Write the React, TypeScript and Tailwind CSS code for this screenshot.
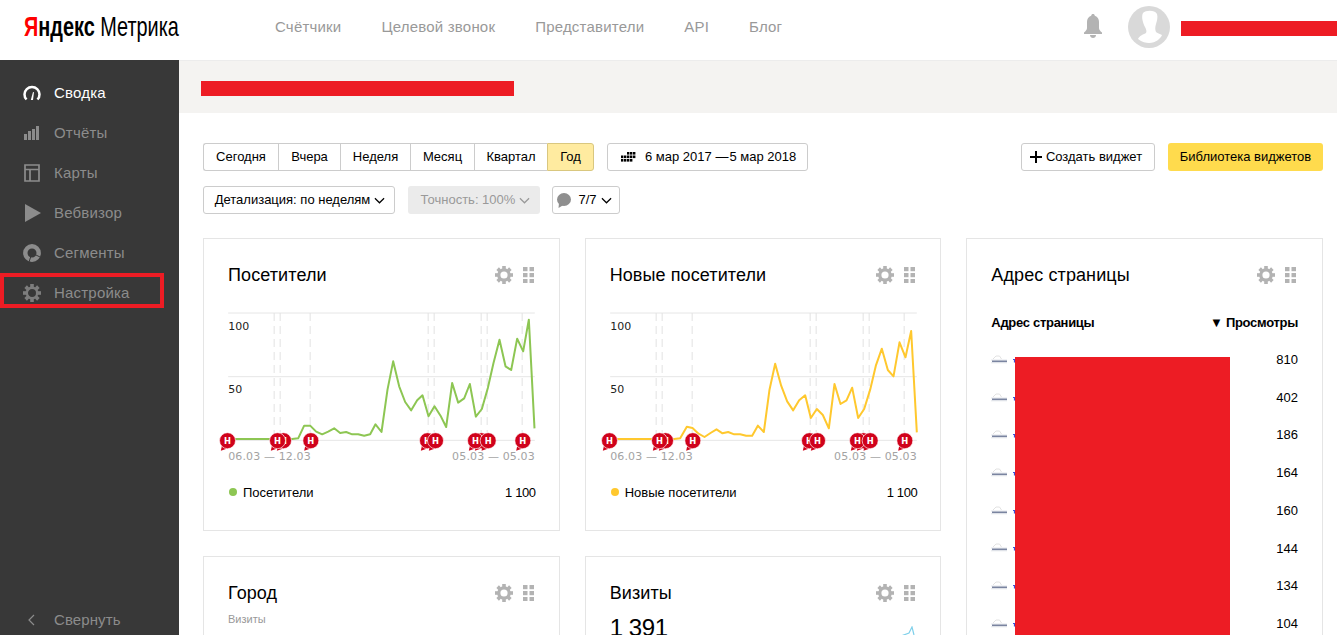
const font = { fontFamily: '"Liberation Sans", Arial, sans-serif' };

type Pt = [number, number];

const visitors: Pt[] = [[70,598],[190,598],[262,598],[280,596],[298,558],[316,558],[334,576],[352,584],[370,576],[388,566],[406,580],[424,577],[442,584],[460,584],[478,588],[496,584],[512,554],[530,577],[548,450],[565,365],[583,440],[601,487],[619,512],[637,482],[653,467],[671,530],[689,500],[707,528],[724,562],[742,430],[760,489],[778,476],[795,433],[813,531],[831,508],[849,445],[866,370],[884,300],[902,380],[919,391],[937,297],[955,335],[972,240],[989,566]];
const newVisitors: Pt[] = [[60,598],[180,598],[252,598],[270,596],[290,561],[307,565],[325,582],[343,592],[361,580],[379,569],[397,581],[414,577],[432,584],[450,584],[468,588],[486,588],[503,558],[521,577],[538,450],[555,372],[573,438],[591,485],[609,512],[627,482],[645,467],[662,535],[680,508],[698,526],[716,566],[733,433],[751,493],[769,482],[786,444],[804,535],[822,508],[840,450],[857,378],[875,327],[893,391],[910,410],[928,308],[946,353],[963,274],[980,578]];

const dashes = [208, 226, 316, 670, 688, 829, 847, 952];
const pins = [68, 236, 218, 318, 668, 692, 830, 812, 850, 954];

const Gear = ({ className = "", color = "#b3b3b3", ring = 3.2 }: { className?: string; color?: string; ring?: number }) => (
  <svg viewBox="0 0 18 18" className={className}>
    <circle cx="9" cy="9" r="5.2" fill="none" stroke={color} strokeWidth={ring} />
    {[0, 45, 90, 135, 180, 225, 270, 315].map((a) => (
      <rect key={a} x="7.2" y="0" width="3.6" height="3.6" fill={color} transform={`rotate(${a} 9 9)`} />
    ))}
  </svg>
);

const Dots = () => (
  <svg viewBox="0 0 11 16" className="w-[11px] h-[16px]">
    {[0, 6.5].map((x) =>
      [0, 6, 12].map((y) => <rect key={`${x}-${y}`} x={x} y={y} width="4.5" height="4.2" fill="#b3b3b3" />)
    )}
  </svg>
);

const Chevron = ({ color = "#000" }: { color?: string }) => (
  <svg viewBox="0 0 12 7" className="w-[11px] h-[7px] ml-[4px]">
    <path d="M1 1l5 5 5-5" fill="none" stroke={color} strokeWidth="1.3" />
  </svg>
);

const Chart = ({ pts, color, ox }: { pts: Pt[]; color: string; ox: number }) => (
  <svg viewBox={`${ox} 220 920 450`} className="w-[307px] h-[150px] overflow-visible">
    {[220, 411, 602].map((y) => (
      <line key={y} x1={ox} x2={ox + 920} y1={y} y2={y} stroke="#e6e6e6" strokeWidth="3" />
    ))}
    <g transform={`translate(${ox - 70} 0)`}>
      {dashes.map((x) => (
        <line key={x} x1={x} x2={x} y1={220} y2={602} stroke="#e2e2e2" strokeWidth="3" strokeDasharray="24 15" />
      ))}
    </g>
    <polyline points={pts.map((p) => p.join(",")).join(" ")} fill="none" stroke={color} strokeWidth="6" strokeLinejoin="round" />
    <g fontFamily='"DejaVu Sans", sans-serif' fontSize="33">
      <text x={ox} y={271} fill="#222">100</text>
      <text x={ox} y={460} fill="#222">50</text>
      <text x={ox} y={661} fill="#a3a3a3" letterSpacing="0.4">06.03 — 12.03</text>
      <text x={ox + 920} y={661} fill="#a3a3a3" textAnchor="end" letterSpacing="0.4">05.03 — 05.03</text>
    </g>
    <g transform={`translate(${ox - 70} 0)`}>
      {pins.map((x, i) => (
        <g key={i}>
          <path d={`M${x - 16} 615 L${x - 20} 633 L${x + 6} 624 Z`} fill="#d0021b" />
          <circle cx={x} cy={603} r={24} fill="#d0021b" stroke="#fff" strokeWidth="2" />
          <text x={x} y={612} fill="#fff" fontSize="25" fontWeight="700" textAnchor="middle" fontFamily='"DejaVu Sans", sans-serif'>Н</text>
        </g>
      ))}
    </g>
  </svg>
);

const CardHead = ({ title }: { title: string }) => (
  <div className="flex items-center justify-between h-[24px] pr-[2px]">
    <div className="text-[18px] text-black tracking-[0.1px]">{title}</div>
    <div className="flex items-center gap-[10px]">
      <Gear className="w-[18px] h-[18px]" />
      <Dots />
    </div>
  </div>
);

const ChartCard = ({ title, pts, color, ox }: { title: string; pts: Pt[]; color: string; ox: number }) => (
  <div className="h-[293px] border border-[#e5e5e5] pl-[24px] pr-[23px] pt-[24px] bg-white">
    <CardHead title={title} />
    <div className="mt-[26px]">
      <Chart pts={pts} color={color} ox={ox} />
    </div>
    <div className="mt-[21px] flex items-center justify-between h-[18px] text-[13px] text-black">
      <div className="flex items-center">
        <span className="w-[8px] h-[8px] rounded-full ml-[1px] mr-[6px] -mt-[3px]" style={{ background: color }} />
        {title}
      </div>
      <div className="tracking-[-0.4px]">1 100</div>
    </div>
  </div>
);

const Favicon = () => (
  <svg viewBox="0 0 24 12" className="w-[24px] h-[12px] shrink-0 overflow-visible">
    <path d="M2 5L5 2h3.500l2 3" fill="none" stroke="#e2e2e2" strokeWidth="1" />
    <rect x="0" y="5.500" width="16" height="1" fill="#e3e6ec" />
    <rect x="1" y="6.500" width="15" height="1.800" fill="#7a84a0" />
    <rect x="0" y="8.300" width="16" height="1" fill="#e3e6ec" />
    <path d="M22 5.500h2.500M23.500 5.500v3" fill="none" stroke="#3f51d8" strokeWidth="1.200" />
  </svg>
);

const rows = ["810", "402", "186", "164", "160", "144", "134", "104"];

const SideItem = ({ icon, label, active }: { icon: React.ReactNode; label: string; active?: boolean }) => (
  <div className={`flex items-center h-[40px] text-[15px] tracking-[0.2px] ${active ? "text-white" : "text-[#8c8c8c]"}`}>
    <div className="w-[54px] pl-[23px] flex items-center shrink-0">{icon}</div>
    {label}
  </div>
);

const segments = [
  { label: "Сегодня", w: "w-[75px]" },
  { label: "Вчера", w: "w-[62px]" },
  { label: "Неделя", w: "w-[70px]" },
  { label: "Месяц", w: "w-[64px]" },
  { label: "Квартал", w: "w-[73px]" },
];

export default function App() {
  return (
    <div className="h-screen overflow-hidden bg-white flex flex-col text-black" style={font}>
      {/* шапка */}
      <div className="h-[60px] shrink-0 flex items-center bg-white">
        <div className="w-[275px] pl-[24px] -mt-[7px]">
          <div className="text-[28px] leading-none whitespace-nowrap origin-left scale-x-[0.71]">
            <span className="font-bold"><span className="text-[#f00]">Я</span>ндекс</span> Метрика
          </div>
        </div>
        <div className="flex items-center gap-[40px] text-[15px] text-[#999] tracking-[0.2px] -mt-[6px]">
          <span>Счётчики</span>
          <span>Целевой звонок</span>
          <span>Представители</span>
          <span>API</span>
          <span>Блог</span>
        </div>
        <div className="ml-auto flex items-center -mt-[6px]">
          <svg viewBox="0 0 18 24" className="w-[18px] h-[24px] mr-[26px] -mt-[2px]">
            <path d="M9 0c1 0 1.7.7 1.8 1.7C13.800 2.600 15 5.200 15 8v6c0 1.500 1.200 3 3 4.500V20H0v-1.500C1.800 17 3 15.500 3 14V8c0-2.800 1.200-5.400 4.200-6.300C7.300.7 8 0 9 0z" fill="#b3b3b3" />
            <path d="M6 21h6c0 2-1.500 3-3 3s-3-1-3-3z" fill="#b3b3b3" />
          </svg>
          <svg viewBox="0 0 42 42" className="w-[42px] h-[42px] mr-[11px]">
            <circle cx="21" cy="21" r="21" fill="#d9d9d9" />
            <path d="M15 7c3-3 12-3 14 1 1 3 0 7-1 10-1 3-1 6 0 8 1 1 4 2 6 3-1 3-6 8-13 8-3 0-7-1-11-4 1-3 6-5 8-6 1-2 0-4-1-6-2-4-4-10-2-14z" fill="#fff" />
          </svg>
          <div className="w-[156px] h-[15px] bg-[#ed1c24] mt-[3px]" />
        </div>
      </div>

      <div className="flex flex-1 min-h-0">
        {/* боковое меню */}
        <div className="relative w-[179px] shrink-0 bg-[#383838] pt-[13px] flex flex-col">
          <SideItem
            active
            label="Сводка"
            icon={
              <svg viewBox="0 0 18 14" className="w-[18px] h-[14px] overflow-visible">
                <path d="M3.500 13.500A7.500 7.500 0 1 1 14.500 13.500" fill="none" stroke="#fff" strokeWidth="2.500" />
                <path d="M7.800 14l2.200-8 1 .3L10 14z" fill="#fff" />
              </svg>
            }
          />
          <SideItem
            label="Отчёты"
            icon={
              <svg viewBox="0 0 15 14" className="w-[15px] h-[14px] ml-[1px]">
                <rect x="0" y="8" width="3" height="6" fill="#8c8c8c" />
                <rect x="4" y="5" width="3" height="9" fill="#8c8c8c" />
                <rect x="8" y="3" width="3" height="11" fill="#8c8c8c" />
                <rect x="12" y="0" width="3" height="14" fill="#8c8c8c" />
              </svg>
            }
          />
          <SideItem
            label="Карты"
            icon={
              <svg viewBox="0 0 16 18" className="w-[16px] h-[18px] ml-[1px]">
                <path d="M1 1h14v16H1zM1 5.500h14M6 5.500V17" fill="none" stroke="#8c8c8c" strokeWidth="1.700" />
              </svg>
            }
          />
          <SideItem
            label="Вебвизор"
            icon={
              <svg viewBox="0 0 16 18" className="w-[16px] h-[18px] ml-[2px]">
                <path d="M0 0l16 9-16 9z" fill="#8c8c8c" />
              </svg>
            }
          />
          <SideItem
            label="Сегменты"
            icon={
              <svg viewBox="0 0 18 18" className="w-[18px] h-[18px]">
                <circle cx="9" cy="9" r="6.700" fill="none" stroke="#8c8c8c" strokeWidth="4.400" />
                <path d="M12 10.500l6 3M8 12l-2 6" stroke="#383838" strokeWidth="1" />
              </svg>
            }
          />
          <SideItem label="Настройка" icon={<Gear className="w-[18px] h-[18px]" color="#7d7d7d" ring={2.400} />} />
          {/* красная рамка поверх пункта */}
          <div className="absolute left-0 top-[213px] w-[164px] h-[35px] border-4 border-[#ed1c24]" />
          <div className="mt-auto flex items-center h-[30px] text-[15px] tracking-[0.1px] text-[#8c8c8c] pl-[28px]">
            <svg viewBox="0 0 7 12" className="w-[7px] h-[12px] mr-[19px]">
              <path d="M6 1L1 6l5 5" fill="none" stroke="#8c8c8c" strokeWidth="1.200" />
            </svg>
            Свернуть
          </div>
        </div>

        {/* контент */}
        <div className="flex-1 min-w-0">
          <div className="h-[53px] bg-[#f4f3f1] border-t border-[#ececec] flex items-center pl-[22px] pt-[2px]">
            <div className="w-[313px] h-[15px] bg-[#ed1c24]" />
          </div>

          <div className="pl-[24px] pr-[14px] pt-[30px]">
            <div className="flex items-center h-[28px] text-[13px]">
              <div className="flex">
                {segments.map((s, i) => (
                  <div
                    key={s.label}
                    className={`${s.w} h-[28px] flex items-center justify-center border-y border-l border-[#ccc] ${i === 0 ? "rounded-l-[3px]" : ""}`}
                  >
                    {s.label}
                  </div>
                ))}
                <div className="w-[47px] h-[28px] flex items-center justify-center bg-[#ffeba0] border border-[#d9c77f] rounded-r-[3px]">
                  Год
                </div>
              </div>
              <div className="ml-[13px] w-[201px] h-[28px] flex items-center border border-[#ccc] rounded-[3px] pl-[13px]">
                <svg viewBox="0 0 15 10" className="w-[15px] h-[10px] mr-[9px]">
                  {[
                    [6, 0], [9, 0], [12, 0],
                    [0, 3.500], [3, 3.500], [6, 3.500], [9, 3.500], [12, 3.500],
                    [0, 7], [3, 7], [6, 7], [9, 7],
                  ].map(([x, y]) => (
                    <rect key={`${x}-${y}`} x={x} y={y} width="2.400" height="2.600" fill="#000" />
                  ))}
                </svg>
                <span className="whitespace-pre">6 мар 2017 —{"\u200A"}5 мар 2018</span>
              </div>
              <div className="ml-auto w-[134px] h-[28px] flex items-center justify-center border border-[#ccc] rounded-[3px] pr-[4px]">
                <svg viewBox="0 0 12 12" className="w-[12px] h-[12px] mr-[4px]">
                  <path d="M6 0v12M0 6h12" stroke="#000" strokeWidth="2" />
                </svg>
                Создать виджет
              </div>
              <div className="ml-[13px] w-[155px] h-[28px] flex items-center justify-center bg-[#ffdb4d] rounded-[3px]">
                Библиотека виджетов
              </div>
            </div>

            <div className="flex items-center h-[28px] mt-[15px] text-[13px]">
              <div className="w-[192px] h-[28px] flex items-center justify-center border border-[#ccc] rounded-[3px] pl-[2px]">
                Детализация: по неделям
                <Chevron />
              </div>
              <div className="ml-[13px] w-[132px] h-[28px] flex items-center justify-center bg-[#ebebeb] text-[#999] rounded-[3px] pl-[3px]">
                Точность: 100%
                <Chevron color="#999" />
              </div>
              <div className="ml-[12px] w-[68px] h-[28px] flex items-center justify-center border border-[#ccc] rounded-[3px] pr-[3px]">
                <svg viewBox="0 0 14 15" className="w-[14px] h-[15px] mr-[7px]">
                  <ellipse cx="7" cy="6.500" rx="7" ry="6.500" fill="#8f8f8f" />
                  <path d="M2 10l-.5 5 5-3z" fill="#8f8f8f" />
                </svg>
                7/7
                <Chevron />
              </div>
            </div>

            <div className="grid grid-cols-3 gap-x-[25px] gap-y-[25px] mt-[24px]">
              <ChartCard title="Посетители" pts={visitors} color="#8dc653" ox={70} />
              <ChartCard title="Новые посетители" pts={newVisitors} color="#ffc82e" ox={60} />

              <div className="relative row-span-2 border border-[#e5e5e5] pl-[24px] pr-[24px] pt-[24px]">
                <CardHead title="Адрес страницы" />
                <div className="mt-[27px] flex items-center justify-between h-[18px] text-[13px] font-bold tracking-[-0.3px]">
                  <div>Адрес страницы</div>
                  <div>▼ Просмотры</div>
                </div>
                <div className="mt-[9px]">
                  {rows.map((n) => (
                    <div key={n} className="flex items-center justify-between h-[37.700px] text-[13px]">
                      <Favicon />
                      <span>{n}</span>
                    </div>
                  ))}
                </div>
                {/* закрашенные адреса */}
                <div className="absolute left-[48px] top-[118px] w-[215px] h-[300px] bg-[#ed1c24]" />
              </div>

              <div className="h-[300px] border border-[#e5e5e5] pl-[24px] pr-[23px] pt-[24px]">
                <CardHead title="Город" />
                <div className="mt-[6px] text-[11px] text-[#999]">Визиты</div>
              </div>
              <div className="relative h-[300px] border border-[#e5e5e5] pl-[24px] pr-[23px] pt-[24px] overflow-hidden">
                <CardHead title="Визиты" />
                <div className="mt-[9px] text-[24px] leading-[28px] tracking-[-0.4px]">1 391</div>
                <svg viewBox="0 0 20 10" className="absolute left-[315px] top-[69px] w-[20px] h-[10px]">
                  <path d="M0 10L8 7l3-6 2 8" fill="none" stroke="#7fd0ea" strokeWidth="1.200" />
                </svg>
              </div>
            </div>
          </div>
        </div>
      </div>
    </div>
  );
}
